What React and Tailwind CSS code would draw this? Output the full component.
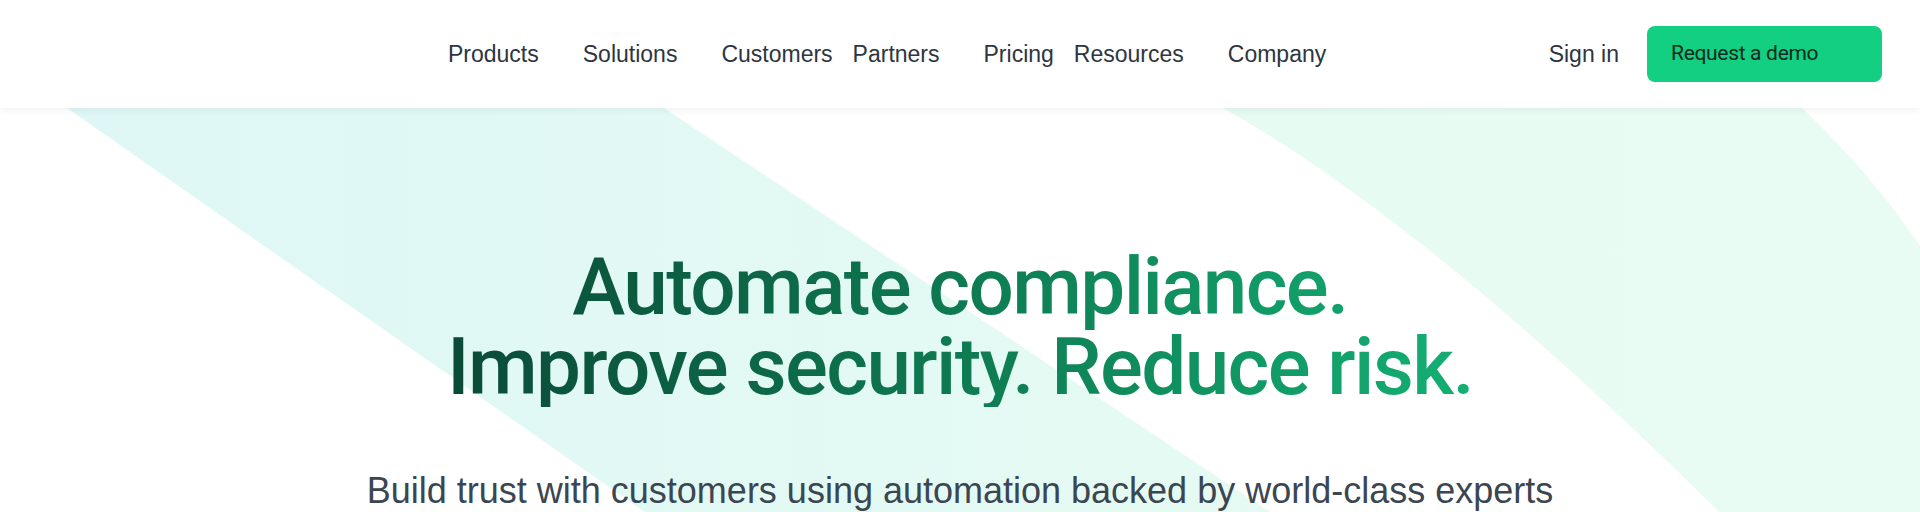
const menu = [
  { label: "Products", dropdown: true },
  { label: "Solutions", dropdown: true },
  { label: "Customers", dropdown: false },
  { label: "Partners", dropdown: true },
  { label: "Pricing", dropdown: false },
  { label: "Resources", dropdown: true },
  { label: "Company", dropdown: false },
];

const NavBar = () => {
  return (
    <header className="relative z-10 h-[108px] w-full bg-white shadow-[0_2px_8px_rgba(15,23,42,0.06)] flex items-center pl-[448px] pr-[38px]">
      <nav className="flex items-center gap-5">
        {menu.map((item) => (
          <a
            key={item.label}
            href="#"
            className="flex items-center text-[23px] text-[#2d3640]"
          >
            {item.label}
            {/* chevron slot stays empty in the reference */}
            {item.dropdown && <span className="inline-block w-6" />}
          </a>
        ))}
      </nav>
      <div className="ml-auto flex items-center gap-7">
        <a href="#" className="text-[23px] text-[#2d3640]">
          Sign in
        </a>
        <a
          href="#"
          className="h-14 w-[235px] rounded-lg bg-[#13cf81] flex items-center pl-6 font-['Roboto',sans-serif] text-[21px] tracking-[-0.015em] text-[#0d2a20]"
        >
          Request a demo
        </a>
      </div>
    </header>
  );
};

const Backdrop = () => (
  <svg
    className="absolute left-0 top-0 h-[600px] w-[1920px]"
    viewBox="0 0 1920 600"
    aria-hidden="true"
  >
    <defs>
      <linearGradient id="bandA" x1="0" y1="0" x2="1" y2="0">
        <stop offset="0" stopColor="#def7f6" />
        <stop offset="1" stopColor="#e7fbf1" />
      </linearGradient>
      <linearGradient id="bandB" x1="0" y1="0" x2="1" y2="0">
        <stop offset="0" stopColor="#e6fbf2" />
        <stop offset="1" stopColor="#e9fcf4" />
      </linearGradient>
    </defs>
    <path d="M67 0 L664 0 L1564 600 L925 600 Z" fill="url(#bandA)" />
    <path
      d="M1223 0 L1802 0 Q1875 70 1920 138 L1920 600 L1900 600 L1719 404 Q1429 116 1223 0 Z"
      fill="url(#bandB)"
    />
  </svg>
);

export default function App() {
  return (
    <div className="min-h-screen bg-white font-['Liberation_Sans',Arial,sans-serif]">
      <NavBar />
      <section className="relative h-[600px] overflow-hidden">
        <Backdrop />
        <div className="relative flex flex-col items-center pt-[139px]">
          <h1 className="inline-block text-center font-['Roboto',sans-serif] font-medium text-[80px] leading-[80px] tracking-[-0.02em] bg-gradient-to-r from-[#0a4a37] via-[#0e7a52] to-[#13b074] bg-clip-text text-transparent">
            Automate compliance.
            <br />
            Improve security. Reduce risk.
          </h1>
          <p className="mt-[57px] text-center text-[36px] leading-[53px] text-[#3b4651]">
            Build trust with customers using automation backed by world-class
            experts
          </p>
        </div>
      </section>
    </div>
  );
}
